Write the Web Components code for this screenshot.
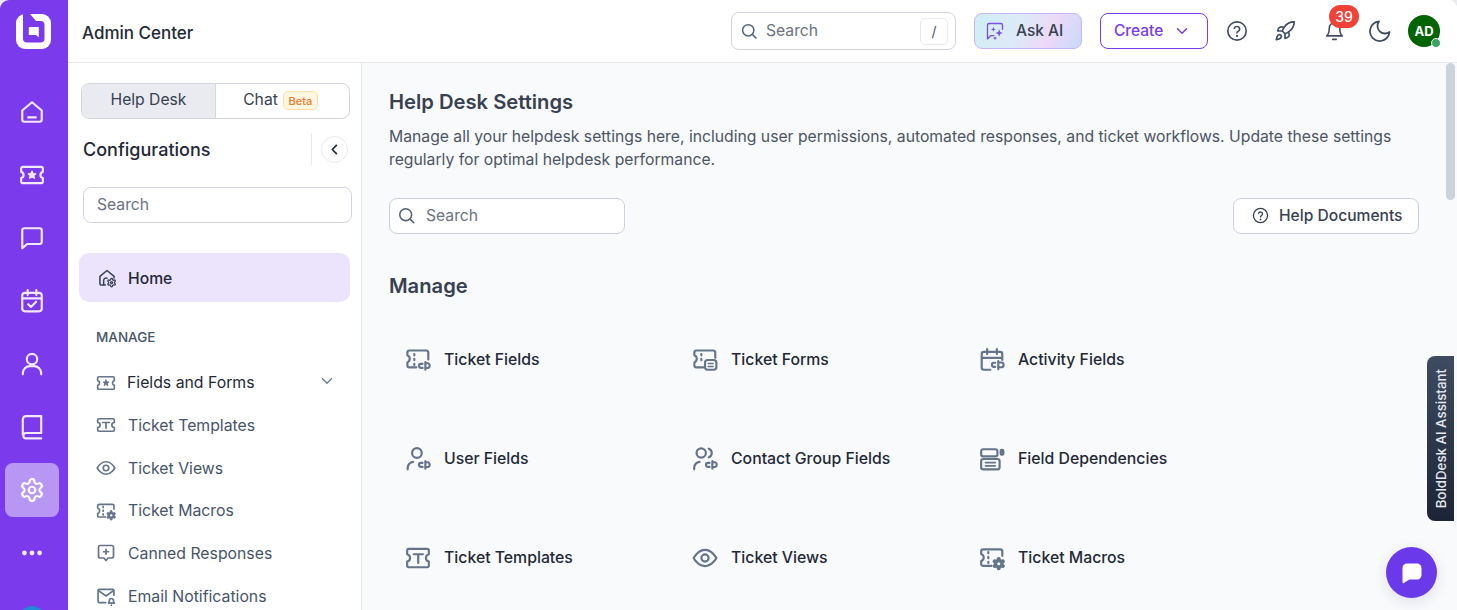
<!DOCTYPE html>
<html lang="en"><head><meta charset="utf-8"><title>Admin Center</title>
<style>
html,body{margin:0;height:610px;overflow:hidden;background:#e9ebef;font-family:Inter,"Liberation Sans",sans-serif;}
</style></head><body>
<admin-app></admin-app>
<script>
const CP='<path d="M16.2 15.500h-1.400a1.900 1.900 0 0 0 0 3.800h1.400"/><path d="M18.800 14v7M18.800 15h2.400a2.300 2.300 0 0 1 0 4.400h-2.400"/>';
const DASH='<path d="M8.600 6.500v1.200M8.600 11v1.200M8.600 15.500v1.200"/>';
const GEARP='M12.220 2h-.44a2 2 0 0 0-2 2v.18a2 2 0 0 1-1 1.730l-.43.250a2 2 0 0 1-2 0l-.15-.08a2 2 0 0 0-2.730.730l-.22.380a2 2 0 0 0 .73 2.730l.15.1a2 2 0 0 1 1 1.720v.51a2 2 0 0 1-1 1.740l-.15.09a2 2 0 0 0-.73 2.730l.22.380a2 2 0 0 0 2.730.730l.15-.08a2 2 0 0 1 2 0l.43.250a2 2 0 0 1 1 1.730V20a2 2 0 0 0 2 2h.44a2 2 0 0 0 2-2v-.18a2 2 0 0 1 1-1.730l.43-.250a2 2 0 0 1 2 0l.15.08a2 2 0 0 0 2.730-.730l.22-.39a2 2 0 0 0-.73-2.730l-.15-.08a2 2 0 0 1-1-1.740v-.5a2 2 0 0 1 1-1.740l.15-.09a2 2 0 0 0 .73-2.730l-.22-.38a2 2 0 0 0-2.730-.73l-.15.08a2 2 0 0 1-2 0l-.43-.25a2 2 0 0 1-1-1.730V4a2 2 0 0 0-2-2z';
const ICONS={
 search:'<circle cx="11" cy="11" r="7.500"/><path d="m16.600 16.600 4.600 4.600"/>',
 home:'<path d="M3 10.600 12 3l9 7.600V19a2 2 0 0 1-2 2H5a2 2 0 0 1-2-2z"/><path d="M8.500 17h7"/>',
 ticketstar:'<path d="M3.600 4.500h16.800A1.600 1.600 0 0 1 22 6.100v3a3 3 0 0 0 0 5.800v3a1.600 1.600 0 0 1-1.600 1.600H3.600A1.600 1.600 0 0 1 2 17.900v-3a3 3 0 0 0 0-5.800v-3a1.600 1.600 0 0 1 1.600-1.600z"/><path fill="currentColor" stroke-width="1" d="m12 8.300 1.100 2.300 2.500.3-1.800 1.700.5 2.500-2.300-1.200-2.300 1.200.5-2.500-1.800-1.700 2.500-.3z"/>',
 chat:'<path d="M21 15.500a2 2 0 0 1-2 2H7.500L3 21.500V5a2 2 0 0 1 2-2h14a2 2 0 0 1 2 2z"/>',
 task:'<rect x="3" y="4.500" width="18" height="17" rx="2.500"/><path d="M8 2v4.500M16 2v4.500M3.500 9.500h17M8.500 15l2.500 2.500 4.800-4.800"/>',
 user:'<circle cx="12" cy="7.500" r="4.800"/><path d="M3.500 21.500v-1a6.500 6.500 0 0 1 6.500-6.500h4a6.500 6.500 0 0 1 6.500 6.500v1"/>',
 book:'<path d="M3.500 19V5a3 3 0 0 1 3-3h14v15.500h-14a2.500 2.500 0 0 0 0 5h14"/>',
 gear:'<path d="'+GEARP+'"/><circle cx="12" cy="12" r="3"/>',
 dots:'<circle cx="5" cy="12" r="2.200" fill="currentColor" stroke="none"/><circle cx="12" cy="12" r="2.200" fill="currentColor" stroke="none"/><circle cx="19" cy="12" r="2.200" fill="currentColor" stroke="none"/>',
 help:'<circle cx="12" cy="12" r="10"/><path d="M9.100 9a3 3 0 0 1 5.800 1c0 2-3 2.600-3 4"/><path d="M12 17.400v.1" stroke-width="2.400"/>',
 rocket:'<path d="M4.500 16.500c-1.500 1.260-2 5-2 5s3.740-.5 5-2c.71-.84.7-2.130-.09-2.910a2.180 2.180 0 0 0-2.910-.09z"/><path d="m12 15-3-3a22 22 0 0 1 2-3.950A12.880 12.880 0 0 1 22 2c0 2.720-.78 7.500-6 11a22.350 22.350 0 0 1-4 2z"/><path d="M9 12H4s.55-3.030 2-4c1.620-1.080 5 0 5 0M12 15v5s3.030-.55 4-2c1.080-1.620 0-5 0-5"/>',
 bell:'<path d="M6 8a6 6 0 0 1 12 0c0 7 3 9 3 9H3s3-2 3-9"/><path d="M10 21h4"/>',
 moon:'<path d="M11 2.500a7.500 7.500 0 0 0 10.500 10.500A9.800 9.800 0 1 1 11 2.500z"/>',
 chevdown:'<path d="m6 9 6 6 6-6"/>',
 chevleft:'<path d="m15 5.500-6.500 6.500 6.500 6.500"/>',
 spark:'<path d="M21 10V5a2 2 0 0 0-2-2H5a2 2 0 0 0-2 2v16.500l4-4h3.500"/><path fill="currentColor" stroke="none" d="m17 10 1.200 3.300 3.300 1.200-3.300 1.200-1.200 3.300-1.200-3.300-3.300-1.200 3.300-1.200zM10 7l.8 2.200L13 10l-2.200.8L10 13l-.8-2.200L7 10l2.200-.8zM12 18l.7 1.800 1.800.7-1.800.7-.7 1.800-.7-1.800-1.800-.7 1.800-.7z"/>',
 homegear:'<path d="M10 20.500H5.500a2 2 0 0 1-2-2V10L12 3l8.500 7v2"/><path d="M8 20v-5a3 3 0 0 1 4-2.800"/><g transform="translate(11.500 11.500) scale(.5)"><path stroke-width="3" d="'+GEARP+'"/><circle cx="12" cy="12" r="2.500" stroke-width="3"/></g>',
 templ:'<path d="M3.500 4.500h17A1.500 1.500 0 0 1 22 6v3a3 3 0 0 0 0 6v3a1.500 1.500 0 0 1-1.500 1.500h-17A1.500 1.500 0 0 1 2 18v-3a3 3 0 0 0 0-6V6a1.500 1.500 0 0 1 1.500-1.500z"/><path d="M8 9h8M12 9v7"/>',
 eye:'<path d="M1.500 12S5.500 4.500 12 4.500 22.500 12 22.500 12 18.500 19.500 12 19.500 1.500 12 1.500 12z"/><circle cx="12" cy="12" r="3.300"/>',
 macro:'<path d="M21.500 10V5.800A1.800 1.800 0 0 0 19.700 4H3.800A1.800 1.800 0 0 0 2 5.800v2.500a3.500 3.500 0 0 1 0 6.600v2.500A1.800 1.800 0 0 0 3.800 19.200H11.500"/>'+DASH+'<g transform="translate(11.500 10.500) scale(.56)"><path fill="currentColor" stroke-width="2" d="'+GEARP+'"/><circle cx="12" cy="12" r="2.500" fill="#fff" stroke="none"/></g>',
 canned:'<path d="M5 3h14a2 2 0 0 1 2 2v11a2 2 0 0 1-2 2h-4.500L12 21l-2.500-3H5a2 2 0 0 1-2-2V5a2 2 0 0 1 2-2z"/><path d="M12 7.500v6M9 10.500h6"/>',
 mail:'<path d="M21.500 11V5.500a1.500 1.500 0 0 0-1.500-1.500H4a1.500 1.500 0 0 0-1.500 1.500v13A1.500 1.500 0 0 0 4 20h7.500"/><path d="m3 5.500 9 6.500 9-6.500"/><path d="M15 20.500c.8-.8 1-1.700 1-3a2.500 2.500 0 0 1 5 0c0 1.300.2 2.200 1 3zM18.500 23v.1"/>',
 tfields:'<path d="M21.500 11.500V5.200A2 2 0 0 0 19.500 3.200H4A1.800 1.800 0 0 0 2.200 5v2.700a3.500 3.500 0 0 1 0 6.500V17A1.800 1.800 0 0 0 4 18.800h6.500"/>'+DASH+CP,
 tforms:'<path d="M21.500 10V5.200A2 2 0 0 0 19.500 3.200H4A1.800 1.800 0 0 0 2.200 5v2.700a3.500 3.500 0 0 1 0 6.500V17A1.800 1.800 0 0 0 4 18.800h6.500"/><path d="M8.600 6.500v1.200M8.600 11v1.200"/><rect x="12" y="12" width="10.500" height="9" rx="2.500"/><path d="M15 15.200h4.500M15 18h4.500" stroke-width="1.500"/>',
 afields:'<path d="M21.500 12V6.500a2 2 0 0 0-2-2h-15a2 2 0 0 0-2 2v12.500a2 2 0 0 0 2 2h6"/><path d="M7.500 2v4.500M16.500 2v4.500M3 10h18"/><path d="M15 14.500h-1.200a1.900 1.900 0 0 0 0 3.800H15M17.800 13v7.500M17.800 14.300h2.700a2.200 2.200 0 0 1 0 4.400h-2.700"/>',
 ufields:'<circle cx="11" cy="6.500" r="4.500"/><path d="M2.500 21.500V20a6 6 0 0 1 5-5.400"/>'+CP,
 cfields:'<circle cx="8.500" cy="6.500" r="4.300"/><path d="M15.500 2.500a4.300 4.300 0 0 1 0 8M2 21.500V20a6 6 0 0 1 5-5.400"/>'+CP,
 fdep:'<rect x="2" y="3" width="15" height="6.500" rx="2"/><rect x="2" y="12" width="17" height="9.500" rx="2"/><path d="M6 15.300h9M6 18.300h9" stroke-width="1.600"/><rect x="19" y="2.500" width="4.500" height="6.500" rx="2" fill="currentColor" stroke="none"/>',
 templw:'<path d="M3.500 3.500h17A1.500 1.500 0 0 1 22 5v3.500a3.500 3.500 0 0 0 0 6.800v3.700a1.500 1.500 0 0 1-1.500 1.500h-17A1.500 1.500 0 0 1 2 19v-3.700a3.500 3.500 0 0 0 0-6.800V5a1.500 1.500 0 0 1 1.500-1.500z"/><path d="M8 8.500h8.500M12.200 8.500v8"/>'
};
class XIcon extends HTMLElement{
 connectedCallback(){
  const r=this.shadowRoot||this.attachShadow({mode:'open'});
  const s=this.getAttribute('size')||20, w=this.getAttribute('sw')||2;
  r.innerHTML=`<style>:host{display:inline-flex;flex:none;line-height:0}</style><svg width="${s}" height="${s}" viewBox="0 0 24 24" fill="none" stroke="currentColor" stroke-width="${w}" stroke-linecap="round" stroke-linejoin="round">${ICONS[this.getAttribute('name')]||''}</svg>`;
 }
}
customElements.define('x-icon',XIcon);
function comp(tag,html){customElements.define(tag,class extends HTMLElement{constructor(){super();this.attachShadow({mode:'open'}).innerHTML=typeof html==='function'?html(this):html;}
 connectedCallback(){if(typeof html==='function'){this.shadowRoot.innerHTML=html(this);}}});}

comp('rail-item',el=>`<style>:host{display:flex;flex:none;width:54px;height:54px;margin-bottom:9px;align-items:center;justify-content:center;border-radius:8px;color:#f1e8fe}
:host([active]){background:#b897f4;color:#fff}</style><x-icon name="${el.getAttribute('icon')}" size="${el.getAttribute('size')||26}" sw="2"></x-icon>`);

comp('nav-rail',`<style>:host{display:flex;flex-direction:column;align-items:center;width:68px;flex:none;background:#7c3aed;height:610px;overflow:hidden;box-sizing:border-box;padding:14.400px 4px 0 0}
.logo{margin:0 0 36px 2px;display:block;flex:none}
.blue{width:24px;height:24px;border-radius:50%;background:#1d8ad8;flex:none;margin-top:17px}</style>
<svg class="logo" width="35" height="35" viewBox="0 0 35 35"><rect width="35" height="35" rx="9" fill="#fff"/><rect x="7" y="7" width="21.500" height="21.500" rx="4" fill="#7c3aed"/><path d="M7 0 14 0 20 7 7 12z" fill="#7c3aed"/><path d="M12.800 13h10v10.200l-3-2.300h-7z" fill="#fff"/></svg>
<rail-item icon="home"></rail-item><rail-item icon="ticketstar"></rail-item><rail-item icon="chat"></rail-item><rail-item icon="task"></rail-item><rail-item icon="user"></rail-item><rail-item icon="book"></rail-item><rail-item icon="gear" active></rail-item><rail-item icon="dots"></rail-item><div class="blue"></div>`);

comp('top-search',`<style>:host{display:flex;align-items:center;box-sizing:border-box;width:225px;height:38px;border:1px solid #d1d5e0;border-radius:8px;background:#fff;padding:0 7px 0 8px;color:#6b7280;font-size:15.700px}
x-icon{color:#55637a;margin-right:8px}span{flex:1;padding-bottom:1px}
.k{flex:none;width:26px;height:25px;border:1px solid #e8eaef;border-radius:5px;display:flex;align-items:center;justify-content:center;color:#4b5563;font-size:14px}</style>
<x-icon name="search" size="18"></x-icon><span>Search</span><div class="k">/</div>`);
comp('ask-ai',`<style>:host{display:flex;align-items:center;box-sizing:border-box;width:108px;height:36px;border:1px solid #cdb4f5;border-radius:8px;background:linear-gradient(115deg,#cfeef6 0%,#dcebf7 40%,#ecd9f8 70%,#c9d9fb 100%);padding:0 0 2px 10px;color:#374151;font-size:15.500px;font-weight:450}
x-icon{color:#7c4fe0;margin:2px 11px 0 0}</style><x-icon name="spark" size="20" sw="1.600"></x-icon>Ask AI`);
comp('create-btn',`<style>:host{display:flex;align-items:center;box-sizing:border-box;width:108px;height:36px;border:1px solid #7c3aed;border-radius:8px;background:#fff;padding:0 0 2px 13px;color:#7c3aed;font-size:15.500px;font-weight:450}
x-icon{margin:2px 0 0 10px}</style>Create<x-icon name="chevdown" size="18"></x-icon>`);
comp('user-avatar',`<style>:host{display:flex;position:relative;width:32px;height:32px;border-radius:50%;background:#006400;color:#fff;font-size:13px;font-weight:700;align-items:center;justify-content:center}
i{position:absolute;right:-1px;bottom:-1px;width:8px;height:8px;border-radius:50%;background:#3aa35f;border:1.500px solid #fff}</style>AD<i></i>`);
comp('top-bar',`<style>:host{display:flex;align-items:center;height:63px;box-sizing:border-box;border-bottom:1px solid #e5e7eb;background:#fff;padding-left:14px;flex:none}
.t{font-size:17px;font-weight:450;color:#1f2937;flex:1;padding-top:4px}
top-search{margin-right:18px}ask-ai{margin-right:18px}
.i{color:#3f4d63;display:flex;width:24px;justify-content:center;margin-left:17px}
.bell{position:relative;margin-left:25px}
.badge{position:absolute;left:7px;top:-16px;background:#ef4238;color:#fff;font-size:14px;font-weight:500;width:30px;height:23px;border-radius:12px;display:flex;align-items:center;justify-content:center}
.m{margin-left:22px}user-avatar{margin-left:16px;margin-right:17px}</style>
<div class="t">Admin Center</div><top-search></top-search><ask-ai></ask-ai><create-btn></create-btn>
<div class="i" style="margin-left:17px"><x-icon name="help" size="22" sw="1.800"></x-icon></div>
<div class="i" style="margin-left:24px"><x-icon name="rocket" size="22" sw="1.800"></x-icon></div>
<div class="i bell"><x-icon name="bell" size="21" sw="1.800"></x-icon><div class="badge">39</div></div>
<div class="i m"><x-icon name="moon" size="24" sw="1.800"></x-icon></div>
<user-avatar></user-avatar>`);

comp('mode-tabs',`<style>:host{display:flex;flex:none;box-sizing:border-box;width:269px;height:36px;margin-left:13px;border:1px solid #d1d5e0;border-radius:8px;overflow:hidden;background:#fff;font-size:15.700px;color:#374151}
div{display:flex;align-items:center;justify-content:center}
.a{width:133px;flex:none;background:#e9ebf0;border-right:1px solid #d1d5e0;padding-bottom:3px;box-sizing:content-box}
.b{flex:1;padding:0 4px 3px 0}
.beta{margin:2px 0 0 5px;font-size:11px;font-weight:500;color:#ea7a2d;background:#fff7df;border:1px solid #fbdf9e;border-radius:5px;height:19px;width:35px;box-sizing:border-box}</style>
<div class="a">Help Desk</div><div class="b">Chat<div class="beta">Beta</div></div>`);
comp('side-search',`<style>:host{display:flex;flex:none;align-items:center;box-sizing:border-box;width:269px;height:36px;margin-left:15px;border:1px solid #d1d5e0;border-radius:8px;background:#fff;padding:0 0 2px 13px;color:#6b7280;font-size:15.700px}</style>Search`);
comp('nav-row',el=>`<style>:host{display:flex;align-items:center;height:42.700px;padding-left:28px;color:#475569;font-size:15.800px;flex:none}
x-icon{color:#64748b;margin-right:12px}
:host([strong]){color:#1f2937}:host([strong]) x-icon{margin-right:11px}span{flex:1}.c{margin-right:14px;color:#64748b}.c x-icon{margin:0}</style>
<x-icon name="${el.getAttribute('icon')}" size="20" sw="2"></x-icon><span><slot></slot></span>${el.hasAttribute('strong')?'<div class="c"><x-icon name="chevdown" size="18" sw="1.600"></x-icon></div>':''}`);
comp('side-panel',`<style>:host{display:flex;flex-direction:column;width:294px;flex:none;box-sizing:border-box;border-right:1px solid #e5e7eb;background:#fff;padding-top:20px;overflow:hidden;height:547px}
.cfg{display:flex;flex:none;align-items:center;height:32px;margin:14px 0 22px;padding-left:15px;font-size:18px;font-weight:450;color:#1f2937}
.cfg span{flex:1}.div{width:1px;height:32px;background:#e5e7eb;margin-right:9px}
.back{width:27px;height:27px;border:1px solid #e8eaef;border-radius:50%;display:flex;align-items:center;justify-content:center;color:#1f2937;margin-right:13px;box-sizing:border-box}
.home{display:flex;align-items:center;height:49px;width:271px;margin:30px 0 27px 11px;background:#ebe4fc;border-radius:10px;padding:1px 0 0 18px;box-sizing:border-box;font-size:15.700px;font-weight:450;color:#1f2937;flex:none}
.home x-icon{margin:0 11px 0 0;color:#374151}
.lab{height:16px;line-height:16px;margin-left:28px;font-size:13.500px;font-weight:450;color:#475569;margin-bottom:16.400px;flex:none}</style>
<mode-tabs></mode-tabs>
<div class="cfg"><span>Configurations</span><div class="div"></div><div class="back"><x-icon name="chevleft" size="15" sw="2.800"></x-icon></div></div>
<side-search></side-search>
<div class="home"><x-icon name="homegear" size="20" sw="1.800"></x-icon>Home</div>
<div class="lab">MANAGE</div>
<nav-row icon="ticketstar" strong>Fields and Forms</nav-row>
<nav-row icon="templ">Ticket Templates</nav-row>
<nav-row icon="eye">Ticket Views</nav-row>
<nav-row icon="macro">Ticket Macros</nav-row>
<nav-row icon="canned">Canned Responses</nav-row>
<nav-row icon="mail">Email Notifications</nav-row>`);

comp('content-search',`<style>:host{display:flex;align-items:center;box-sizing:border-box;width:236px;height:36px;border:1px solid #cbd2dd;border-radius:8px;background:#fff;padding:0 0 1px 7px;color:#6b7280;font-size:15.700px}
x-icon{color:#55637a;margin-right:10px}</style><x-icon name="search" size="19"></x-icon>Search`);
comp('help-docs',`<style>:host{display:flex;align-items:center;box-sizing:border-box;width:186px;height:36px;border:1px solid #cbd2dd;border-radius:8px;background:#fff;padding:0 0 1px 18px;color:#374151;font-size:15.600px;font-weight:450}
x-icon{margin-right:10px;color:#374151}</style><x-icon name="help" size="17" sw="1.800"></x-icon>Help Documents`);
comp('setting-item',el=>`<style>:host{display:flex;align-items:center;height:99px;padding-left:16px;color:#1f2937;font-size:15.800px;font-weight:450;box-sizing:border-box}
x-icon{color:#64748b;margin-right:13px}</style><x-icon name="${el.getAttribute('icon')}" size="26" sw="2"></x-icon><slot></slot>`);
comp('settings-main',`<style>:host{display:flex;flex:1;min-width:0;height:547px;background:#f9fafc;overflow:hidden;position:relative}
.c{flex:1;min-width:0;padding:27px 0 0 27px}
h1{margin:0;font-size:20.200px;font-weight:600;color:#374151;line-height:24px}
p{margin:11px 0 0;font-size:15.720px;line-height:23px;color:#4b5563;width:1030px}
.tools{display:flex;justify-content:space-between;align-items:center;margin:27px 27px 0 0}
h2{margin:39px 0 0;font-size:20.200px;font-weight:600;color:#374151;line-height:26px}
.g{display:grid;grid-template-columns:repeat(3,287px);padding-top:11px}
.bar{width:9px;flex:none;margin-right:2px}.bar i{display:block;height:137px;background:#cbd3dc;border-radius:5px}
.ai{position:absolute;right:3px;top:293px;width:27px;height:165px;background:linear-gradient(180deg,#3e4b60,#1c2536);border-radius:8px 0 0 8px;color:#e6e9ee;font-size:13.300px;font-weight:500;display:flex;align-items:center;justify-content:center}
.ai span{writing-mode:vertical-rl;transform:rotate(180deg);white-space:nowrap}
.fab{position:absolute;left:1024px;top:484px;width:51px;height:51px;border-radius:50%;background:#6a39ea;box-shadow:0 4px 14px rgba(40,30,90,.12);display:flex;align-items:center;justify-content:center}</style>
<div class="c"><h1>Help Desk Settings</h1>
<p>Manage all your helpdesk settings here, including user permissions, automated responses, and ticket workflows. Update these settings regularly for optimal helpdesk performance.</p>
<div class="tools"><content-search></content-search><help-docs></help-docs></div>
<h2>Manage</h2>
<div class="g">
<setting-item icon="tfields">Ticket Fields</setting-item><setting-item icon="tforms">Ticket Forms</setting-item><setting-item icon="afields">Activity Fields</setting-item>
<setting-item icon="ufields">User Fields</setting-item><setting-item icon="cfields">Contact Group Fields</setting-item><setting-item icon="fdep">Field Dependencies</setting-item>
<setting-item icon="templw">Ticket Templates</setting-item><setting-item icon="eye">Ticket Views</setting-item><setting-item icon="macro">Ticket Macros</setting-item>
</div></div>
<div class="bar"><i></i></div>
<div class="ai"><span>BoldDesk AI Assistant</span></div>
<div class="fab"><svg width="24" height="24" viewBox="0 0 24 24"><path fill="#fff" d="M7 2.500h10a4.500 4.500 0 0 1 4.500 4.500v7a4.500 4.500 0 0 1-4.500 4.500H9.500L4.500 21.500a1 1 0 0 1-2-.5V7A4.500 4.500 0 0 1 7 2.500z"/></svg></div>`);
comp('admin-app',`<style>:host{display:flex;width:1457px;height:610px;overflow:hidden;border-radius:9px 9px 0 0;background:#fff}
.r{flex:1;min-width:0;display:flex;flex-direction:column}.b{display:flex;flex:1;min-height:0}</style>
<nav-rail></nav-rail><div class="r"><top-bar></top-bar><div class="b"><side-panel></side-panel><settings-main></settings-main></div></div>`);
</script>
</body></html>
